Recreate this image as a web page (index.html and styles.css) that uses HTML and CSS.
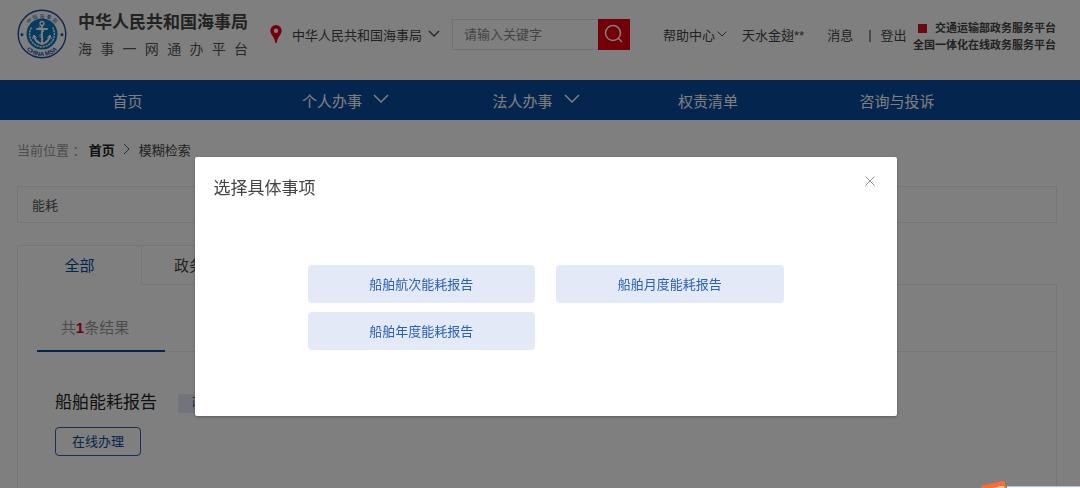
FILE: index.html
```html
<!DOCTYPE html>
<html lang="zh-CN">
<head>
  <meta charset="UTF-8">
  <meta name="viewport" content="width=device-width, initial-scale=1">
  <title>海事一网通办平台</title>
  <link rel="stylesheet" href="styles.css">
</head>
<body>

  <header class="header">
    <a class="brand" href="#">
      <svg class="emblem" viewBox="0 0 50 50" aria-hidden="true">
        <defs>
          <path id="arcTop" d="M7.500 26 A17.500 17.500 0 0 1 42.500 26"/>
          <path id="arcBottom" d="M3 25 A22 22 0 0 0 47 25"/>
        </defs>
        <circle cx="25" cy="25" r="23.800" fill="#fff" stroke="#1d4f9e" stroke-width="1.400"/>
        <circle cx="25" cy="25" r="15.500" fill="#0a78be"/>
        <text class="emblem-text"><textPath href="#arcTop" startOffset="50%">中 国 海 事 局</textPath></text>
        <text class="emblem-text emblem-en"><textPath href="#arcBottom" startOffset="50%">CHINA MSA</textPath></text>
        <path d="M5 23.500l.6 1.300 1.400.2-1 1 .2 1.400-1.200-.7-1.200.7.2-1.400-1-1 1.400-.2zM45 23.500l.6 1.300 1.400.2-1 1 .2 1.400-1.200-.7-1.200.7.2-1.400-1-1 1.400-.2z" fill="#1d4f9e"/>
        <g fill="none" stroke="#fff" stroke-linecap="round">
          <circle cx="25" cy="14.500" r="2" stroke-width="1.300"/>
          <path d="M25 16.500V34M20 20h10" stroke-width="1.900"/>
          <path d="M17 27c1 5 4 7 8 8 4-1 7-3 8-8" stroke-width="2"/>
          <path d="M15.500 29.500l1.500-3.500 2.500 2.500M34.500 29.500L33 26l-2.500 2.500" stroke-width="1"/>
          <path d="M14 19c-4 9 1 18 11 19 10-1 15-10 11-19" stroke-width="1.500" stroke-dasharray="1 2"/>
          <path d="M22 18c5 2 6 4 3 6s-3 4 1 6" stroke-width="1"/>
        </g>
      </svg>
      <span class="brand-text">
        <strong class="brand-name">中华人民共和国海事局</strong>
        <span class="brand-sub"><i>海</i><i>事</i><i>一</i><i>网</i><i>通</i><i>办</i><i>平</i><i>台</i></span>
      </span>
    </a>

    <button class="org" type="button">
      <svg class="pin" viewBox="0 0 12 18" aria-hidden="true"><path d="M6 0a5.700 5.700 0 0 0-5.700 5.700C.3 9.500 4.500 11.500 5.300 18h1.400c.8-6.500 5-8.500 5-12.300A5.700 5.700 0 0 0 6 0zm0 3.500a2.200 2.200 0 1 1 0 4.400 2.200 2.200 0 0 1 0-4.400z" fill="#e60012" fill-rule="evenodd"/></svg>
      <span>中华人民共和国海事局</span>
      <svg class="arrow" viewBox="0 0 12 8" aria-hidden="true"><path d="M1 1l5 5 5-5"/></svg>
    </button>

    <form class="search">
      <input class="search-input" type="text" placeholder="请输入关键字" aria-label="请输入关键字">
      <button class="search-btn" type="button" aria-label="搜索">
        <svg viewBox="0 0 20 20" aria-hidden="true"><circle cx="9" cy="9" r="7.500"/><path d="M14 14l4 4"/></svg>
      </button>
    </form>

    <div class="user">
      <a class="help" href="#">帮助中心<svg class="arrow thin" viewBox="0 0 10 8" aria-hidden="true"><path d="M.5 1.500L5 6l4.500-4.500"/></svg></a>
      <a class="name" href="#">天水金翅**</a>
      <a class="msg" href="#">消息</a>
      <span class="bar">|</span>
      <a href="#">登出</a>
    </div>

    <div class="platforms">
      <a class="platform-main" href="#">交通运输部政务服务平台</a>
      <a href="#">全国一体化在线政务服务平台</a>
    </div>
  </header>

  <nav class="nav">
    <a href="#">首页</a>
    <a href="#">个人办事<svg class="nav-arrow" viewBox="0 0 16 10" aria-hidden="true"><path d="M1 1l7 7 7-7"/></svg></a>
    <a href="#">法人办事<svg class="nav-arrow" viewBox="0 0 16 10" aria-hidden="true"><path d="M1 1l7 7 7-7"/></svg></a>
    <a href="#">权责清单</a>
    <a href="#">咨询与投诉</a>
  </nav>

  <main class="main">
    <div class="crumbs">
      <span class="crumbs-label">当前位置 ：</span>
      <a class="crumbs-home" href="#">首页</a>
      <svg class="crumbs-arrow" viewBox="0 0 8 12" aria-hidden="true"><path d="M1 1l5 5-5 5"/></svg>
      <span>模糊检索</span>
    </div>

    <input class="keyword" type="text" value="能耗" aria-label="检索内容">

    <div class="tabs">
      <button class="tab active" type="button">全部</button>
      <button class="tab" type="button">政务服务</button>
      <div class="tabs-rest"></div>
    </div>

    <section class="results">
      <div class="count-row">
        <div class="count">共<b>1</b>条结果</div>
      </div>
      <div class="item">
        <div class="item-head">
          <h2>船舶能耗报告</h2>
          <span class="tag">政务服务</span>
        </div>
        <button class="apply" type="button">在线办理</button>
      </div>
    </section>
  </main>

  <div class="overlay">
    <div class="dialog" role="dialog" aria-modal="true" aria-labelledby="dialogTitle">
      <div class="dialog-head">
        <h3 id="dialogTitle">选择具体事项</h3>
        <button class="close" type="button" aria-label="关闭">
          <svg viewBox="0 0 10 10" aria-hidden="true"><path d="M.5.5l9 9M9.500.5l-9 9"/></svg>
        </button>
      </div>
      <div class="options">
        <button class="option" type="button">船舶航次能耗报告</button>
        <button class="option" type="button">船舶月度能耗报告</button>
        <button class="option" type="button">船舶年度能耗报告</button>
      </div>
    </div>
  </div>

  <!-- floating helper peeking in from the bottom edge -->
  <div class="helper">
    <svg class="helper-icon" viewBox="0 0 26 7" aria-hidden="true"><path d="M0 5L21 0q2 0 3 2l1 5H0z" fill="#ff6b35"/><path d="M11 7l9-2 3 0 .5 2z" fill="#ffc9b0"/></svg>
    <div class="helper-panel"></div>
  </div>

</body>
</html>
```

FILE: styles.css
```css
* {
  box-sizing: border-box;
}

body {
  display: flex;
  flex-direction: column;
  min-height: 100vh;
  margin: 0;
  font-family: "Liberation Sans", "Noto Sans CJK SC", sans-serif;
  font-size: 13px;
  color: #444;
  background: #fff;
}

a {
  color: inherit;
  text-decoration: none;
}

button, input {
  font-family: inherit;
  font-size: inherit;
  color: inherit;
  margin: 0;
}

button {
  padding: 0;
  border: none;
  background: none;
  cursor: pointer;
}

svg {
  display: block;
  flex: none;
}

/* header */
.header {
  display: flex;
  align-items: center;
  height: 80px;
  padding: 0 24px 12px 17px;
  white-space: nowrap;
}

.brand {
  display: flex;
  align-items: center;
  gap: 11px;
}

.emblem {
  width: 50px;
  height: 50px;
}

.emblem-text {
  font-size: 5px;
  fill: #1d4f9e;
  text-anchor: middle;
}

.emblem-en {
  font-size: 6px;
  font-weight: bold;
}

.brand-text {
  display: flex;
  flex-direction: column;
  width: 170px;
  padding-top: 4px;
}

.brand-name {
  font-size: 17px;
  line-height: 26px;
}

.brand-sub {
  display: flex;
  justify-content: space-between;
  font-size: 14px;
  line-height: 26px;
  color: #555;
}

.brand-sub i {
  font-style: normal;
}

.org {
  display: flex;
  align-items: center;
  margin-left: 22px;
}

.pin {
  width: 12px;
  height: 18px;
  margin-right: 10px;
}

.arrow {
  width: 12px;
  height: 8px;
  margin-left: 6px;
  fill: none;
  stroke: #555;
  stroke-width: 1.500;
}

.arrow.thin {
  width: 10px;
  margin-left: 2px;
  stroke-width: 1;
}

.search {
  display: flex;
  width: 178px;
  height: 31px;
  margin-left: 12px;
}

.search-input {
  flex: 1;
  min-width: 0;
  padding: 0 11px;
  border: 1px solid #e2e2e2;
  border-right: none;
  background: #fff;
  outline: none;
}

.search-input::placeholder {
  color: #888;
}

.search-btn {
  display: flex;
  align-items: center;
  justify-content: center;
  width: 32px;
  background: #e60012;
}

.search-btn svg {
  width: 20px;
  height: 20px;
  fill: none;
  stroke: #fff;
  stroke-width: 1.500;
}

.user {
  display: flex;
  align-items: center;
  margin-left: 33px;
}

.help {
  display: flex;
  align-items: center;
}

.name {
  margin-left: 15px;
}

.msg {
  margin-left: 23px;
}

.bar {
  margin: 0 9px 0 15px;
}

.platforms {
  display: flex;
  flex-direction: column;
  align-items: flex-end;
  margin-left: auto;
  padding-top: 6px;
  font-size: 11px;
  font-weight: bold;
  line-height: 17px;
}

.platform-main {
  display: flex;
  align-items: center;
  gap: 8px;
}

.platform-main::before {
  content: "";
  width: 9px;
  height: 9px;
  background: #d8121a;
}

/* navigation */
.nav {
  display: grid;
  grid-template-columns: 235fr 201fr 180fr 164fr 214fr;
  height: 40px;
  padding: 0 76px 0 10px;
  background: #084a9c;
  color: #fff;
  font-size: 15px;
}

.nav a {
  display: flex;
  align-items: center;
  justify-content: center;
}

.nav-arrow {
  width: 16px;
  height: 10px;
  margin: 0 0 3px 11px;
  fill: none;
  stroke: #fff;
  stroke-width: 1.500;
}

/* content */
.main {
  flex: 1;
  display: flex;
  flex-direction: column;
  padding: 0 23px 0 17px;
}

.crumbs {
  display: flex;
  align-items: center;
  height: 58px;
}

.crumbs-label {
  margin-right: 3px;
  color: #999;
}

.crumbs-home {
  color: #222;
  font-weight: bold;
}

.crumbs-arrow {
  width: 8px;
  height: 12px;
  margin: 0 8px;
  fill: none;
  stroke: #555;
}

.keyword {
  width: 100%;
  height: 37px;
  margin-top: 8px;
  padding: 0 14px;
  border: 1px solid #eaeaea;
  color: #555;
  outline: none;
}

.tabs {
  display: flex;
  height: 40px;
  margin-top: 22px;
}

.tab {
  width: 125px;
  padding-bottom: 2px;
  border: 1px solid #eaeaea;
  border-left: none;
  font-size: 15px;
}

.tab.active {
  border-left: 1px solid #eaeaea;
  border-bottom-color: transparent;
  color: #084a9c;
}

.tabs-rest {
  flex: 1;
  border-bottom: 1px solid #eaeaea;
}

.results {
  flex: 1;
  border: 1px solid #eaeaea;
  border-top: none;
  border-bottom: none;
}

.count-row {
  display: flex;
  margin-left: 19px;
  border-bottom: 1px solid #eaeaea;
}

.count {
  width: 128px;
  height: 67px;
  margin-bottom: -1px;
  padding-right: 12px;
  border-bottom: 2px solid #084a9c;
  color: #999;
  font-size: 15px;
  line-height: 86px;
  text-align: center;
}

.count b {
  color: #e60012;
}

.item {
  padding: 38px 37px 20px;
}

.item-head {
  display: flex;
  align-items: center;
  gap: 21px;
}

.item h2 {
  margin: 0;
  color: #222;
  font-size: 17px;
  font-weight: normal;
  line-height: 26px;
}

.tag {
  padding: 0 14px;
  background: #e3e9f7;
  color: #2a62b0;
  font-size: 12px;
  line-height: 19px;
}

.apply {
  width: 86px;
  height: 29px;
  margin-top: 11px;
  padding-bottom: 2px;
  border: 1px solid #2a62b0;
  border-radius: 4px;
  color: #084a9c;
}

/* dialog */
.overlay {
  position: fixed;
  inset: 0;
  display: flex;
  align-items: flex-start;
  justify-content: center;
  padding: 157px 0 0 11px;
  background: rgba(0, 0, 0, 0.5);
}

.dialog {
  width: 65vw;
  padding: 19px 19px 66px;
  border-radius: 2px;
  background: #fff;
  box-shadow: 0 1px 3px rgba(0, 0, 0, 0.3);
}

.dialog-head {
  display: flex;
  align-items: flex-start;
  justify-content: space-between;
}

.dialog h3 {
  margin: 0;
  font-size: 17px;
  font-weight: normal;
  line-height: 26px;
}

.close {
  padding: 0 3px;
}

.close svg {
  width: 10px;
  height: 10px;
  fill: none;
  stroke: #909399;
}

.options {
  display: grid;
  grid-template-columns: 1fr 1fr;
  gap: 9px 21px;
  margin: 63px 94px 0;
}

.option {
  height: 38px;
  padding-bottom: 2px;
  border-radius: 4px;
  background: #e3e9f7;
  color: #2a62b0;
}

/* helper */
.helper {
  position: fixed;
  right: 0;
  bottom: 0;
  display: flex;
  align-items: flex-end;
}

.helper-icon {
  width: 26px;
  height: 7px;
}

.helper-panel {
  width: 73px;
  height: 2px;
  border-top: 1px solid #b5c7d6;
  background: #f2f8fd;
}
```
